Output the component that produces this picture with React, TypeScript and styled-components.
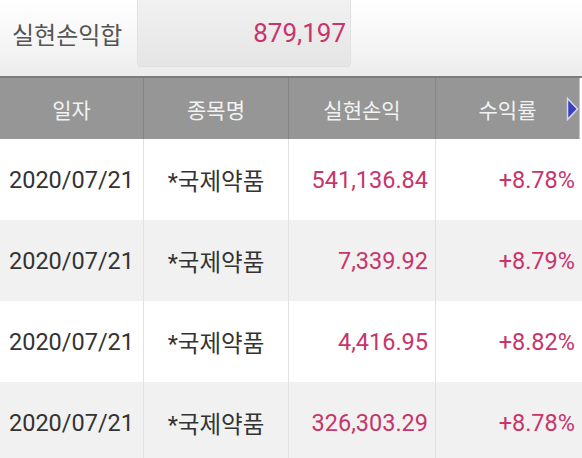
import styled, { createGlobalStyle } from "styled-components";

const GlobalStyle = createGlobalStyle`
  html, body {
    margin: 0;
    padding: 0;
    background: #ffffff;
    overflow: hidden;
  }
  body {
    font-family: Roboto, "Noto Sans CJK KR", sans-serif;
  }
`;

const Page = styled.div`
  width: 582px;
  height: 458px;
  overflow: hidden;
  display: flex;
  flex-direction: column;
`;

/* ---------------------------------------------------------------------------- */

const SummaryBar = styled.div`
  flex-shrink: 0;
  height: 76px;
  display: flex;
  align-items: flex-start;
  background: linear-gradient(#ffffff, #f6f6f6 55%, #ececec);
  border-bottom: 2px solid #7c7c7c;
`;

const SummaryLabel = styled.div`
  width: 137px;
  height: 66px;
  box-sizing: border-box;
  padding-left: 12px;
  display: flex;
  align-items: center;
  font-family: "Noto Sans CJK KR", sans-serif;
  font-size: 24px;
  color: #555555;
`;

const SummaryBox = styled.div`
  width: 214px;
  height: 67px;
  box-sizing: border-box;
  padding-right: 4px;
  display: flex;
  align-items: center;
  justify-content: flex-end;
  background: linear-gradient(#f1f1f1, #e5e5e5);
  border: 1px solid #e0e0e0;
  border-top: none;
  border-radius: 0 0 4px 4px;
  font-family: Roboto, sans-serif;
  font-size: 26px;
  color: #c7356a;
`;

/* ---------------------------------------------------------------------------- */

const Table = styled.div`
  flex-shrink: 0;
  display: grid;
  grid-template-columns: 143px 145px 147px 147px;
`;

const HeaderCell = styled.div<{ $first?: boolean; $last?: boolean }>`
  height: 61px;
  position: relative;
  display: flex;
  align-items: center;
  justify-content: center;
  background: #969696;
  border-left: ${(p) => (p.$first ? "none" : "1px solid #858585")};
  border-right: ${(p) => (p.$last ? "1px solid #c4c4c4" : "none")};
  margin-right: ${(p) => (p.$last ? "2px" : "0")};
  font-family: "Noto Sans CJK KR", sans-serif;
  font-size: 21px;
  color: #f2f2f2;
`;

const NextArrow = styled.svg`
  position: absolute;
  right: 0;
  top: 19px;
`;

const Cell = styled.div<{ $align: "center" | "right"; $even: boolean; $red?: boolean; $first?: boolean }>`
  height: 81px;
  box-sizing: border-box;
  display: flex;
  align-items: center;
  justify-content: ${(p) => (p.$align === "right" ? "flex-end" : "center")};
  padding: 0 7px;
  background: ${(p) => (p.$even ? "#f1f1f1" : "#ffffff")};
  border-left: ${(p) => (p.$first ? "none" : "1px solid #e2e2e2")};
  font-family: Roboto, "Noto Sans CJK KR", sans-serif;
  font-size: 23.5px;
  color: ${(p) => (p.$red ? "#c7356a" : "#333333")};
  white-space: nowrap;
`;

const rows = [
  { date: "2020/07/21", name: "*국제약품", profit: "541,136.84", rate: "+8.78%" },
  { date: "2020/07/21", name: "*국제약품", profit: "7,339.92", rate: "+8.79%" },
  { date: "2020/07/21", name: "*국제약품", profit: "4,416.95", rate: "+8.82%" },
  { date: "2020/07/21", name: "*국제약품", profit: "326,303.29", rate: "+8.78%" },
];

export default function App() {
  return (
    <Page>
      <GlobalStyle />
      <SummaryBar>
        <SummaryLabel>실현손익합</SummaryLabel>
        <SummaryBox>879,197</SummaryBox>
      </SummaryBar>
      <Table>
        <HeaderCell $first>일자</HeaderCell>
        <HeaderCell>종목명</HeaderCell>
        <HeaderCell>실현손익</HeaderCell>
        <HeaderCell $last>
          수익률
          <NextArrow width="13" height="24" viewBox="0 0 13 24">
            <polygon points="1.5,1.5 11.5,12 1.5,22.5" fill="#3b3fc2" stroke="#d8d8e8" strokeWidth="1.5" />
          </NextArrow>
        </HeaderCell>
        {rows.map((r, i) => {
          const even = i % 2 === 1;
          return [
            <Cell key={`d${i}`} $align="center" $even={even} $first>{r.date}</Cell>,
            <Cell key={`n${i}`} $align="center" $even={even}>{r.name}</Cell>,
            <Cell key={`p${i}`} $align="right" $even={even} $red>{r.profit}</Cell>,
            <Cell key={`r${i}`} $align="right" $even={even} $red>{r.rate}</Cell>,
          ];
        })}
      </Table>
    </Page>
  );
}
